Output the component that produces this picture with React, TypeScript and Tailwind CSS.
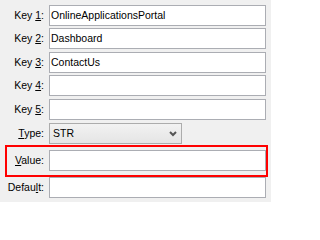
import React from "react";

function Label({ children, w = "w-[49px]" }: { children: React.ReactNode; w?: string }) {
  return (
    <div className={`${w} shrink-0 pr-[5px] text-right leading-none`}>{children}</div>
  );
}

function Input({ value = "" }: { value?: string }) {
  return (
    <div className="w-[217px] h-[21px] shrink-0 border border-[#abadb3] bg-white pl-[1px] flex items-center leading-none">
      {value}
    </div>
  );
}

function U({ children }: { children: React.ReactNode }) {
  return <span className="underline underline-offset-[1px] decoration-1">{children}</span>;
}

export default function App() {
  return (
    <div className="w-[271px] h-[202px] bg-[#f0f0f0] pt-[5px] font-['Liberation_Sans',Arial,sans-serif] text-[10.5px] text-black overflow-hidden">
      <div className="flex items-center h-[21px]">
        <Label>Key <U>1</U>:</Label>
        <Input value="OnlineApplicationsPortal" />
      </div>
      <div className="flex items-center h-[21px] mt-[2px]">
        <Label>Key <U>2</U>:</Label>
        <Input value="Dashboard" />
      </div>
      <div className="flex items-center h-[21px] mt-[3px]">
        <Label>Key <U>3</U>:</Label>
        <Input value="ContactUs" />
      </div>
      <div className="flex items-center h-[21px] mt-[2px]">
        <Label>Key <U>4</U>:</Label>
        <Input />
      </div>
      <div className="flex items-center h-[21px] mt-[3px]">
        <Label>Key <U>5</U>:</Label>
        <Input />
      </div>
      <div className="flex items-center h-[21px] mt-[3px]">
        <Label><U>T</U>ype:</Label>
        <div className="w-[133px] h-[21px] border border-[#acacac] bg-gradient-to-b from-[#f2f2f2] to-[#e5e5e5] flex items-center justify-between pl-[3px] pr-[4px] leading-none">
          <span>STR</span>
          <svg width="8" height="6" viewBox="0 0 8 6" className="mt-[1px]">
            <path d="M1 1 L4 4 L7 1" fill="none" stroke="#555555" strokeWidth="2" />
          </svg>
        </div>
      </div>
      <div className="ml-[5px] mt-[1px] w-[263px] h-[32px] border-2 border-[#ff0000] pt-[3px] flex items-start">
        <div className="flex items-center h-[21px]">
          <Label w="w-[42px]"><U>V</U>alue:</Label>
          <Input />
        </div>
      </div>
      <div className="flex items-center h-[21px]">
        <Label>Defau<U>l</U>t:</Label>
        <Input />
      </div>
    </div>
  );
}
